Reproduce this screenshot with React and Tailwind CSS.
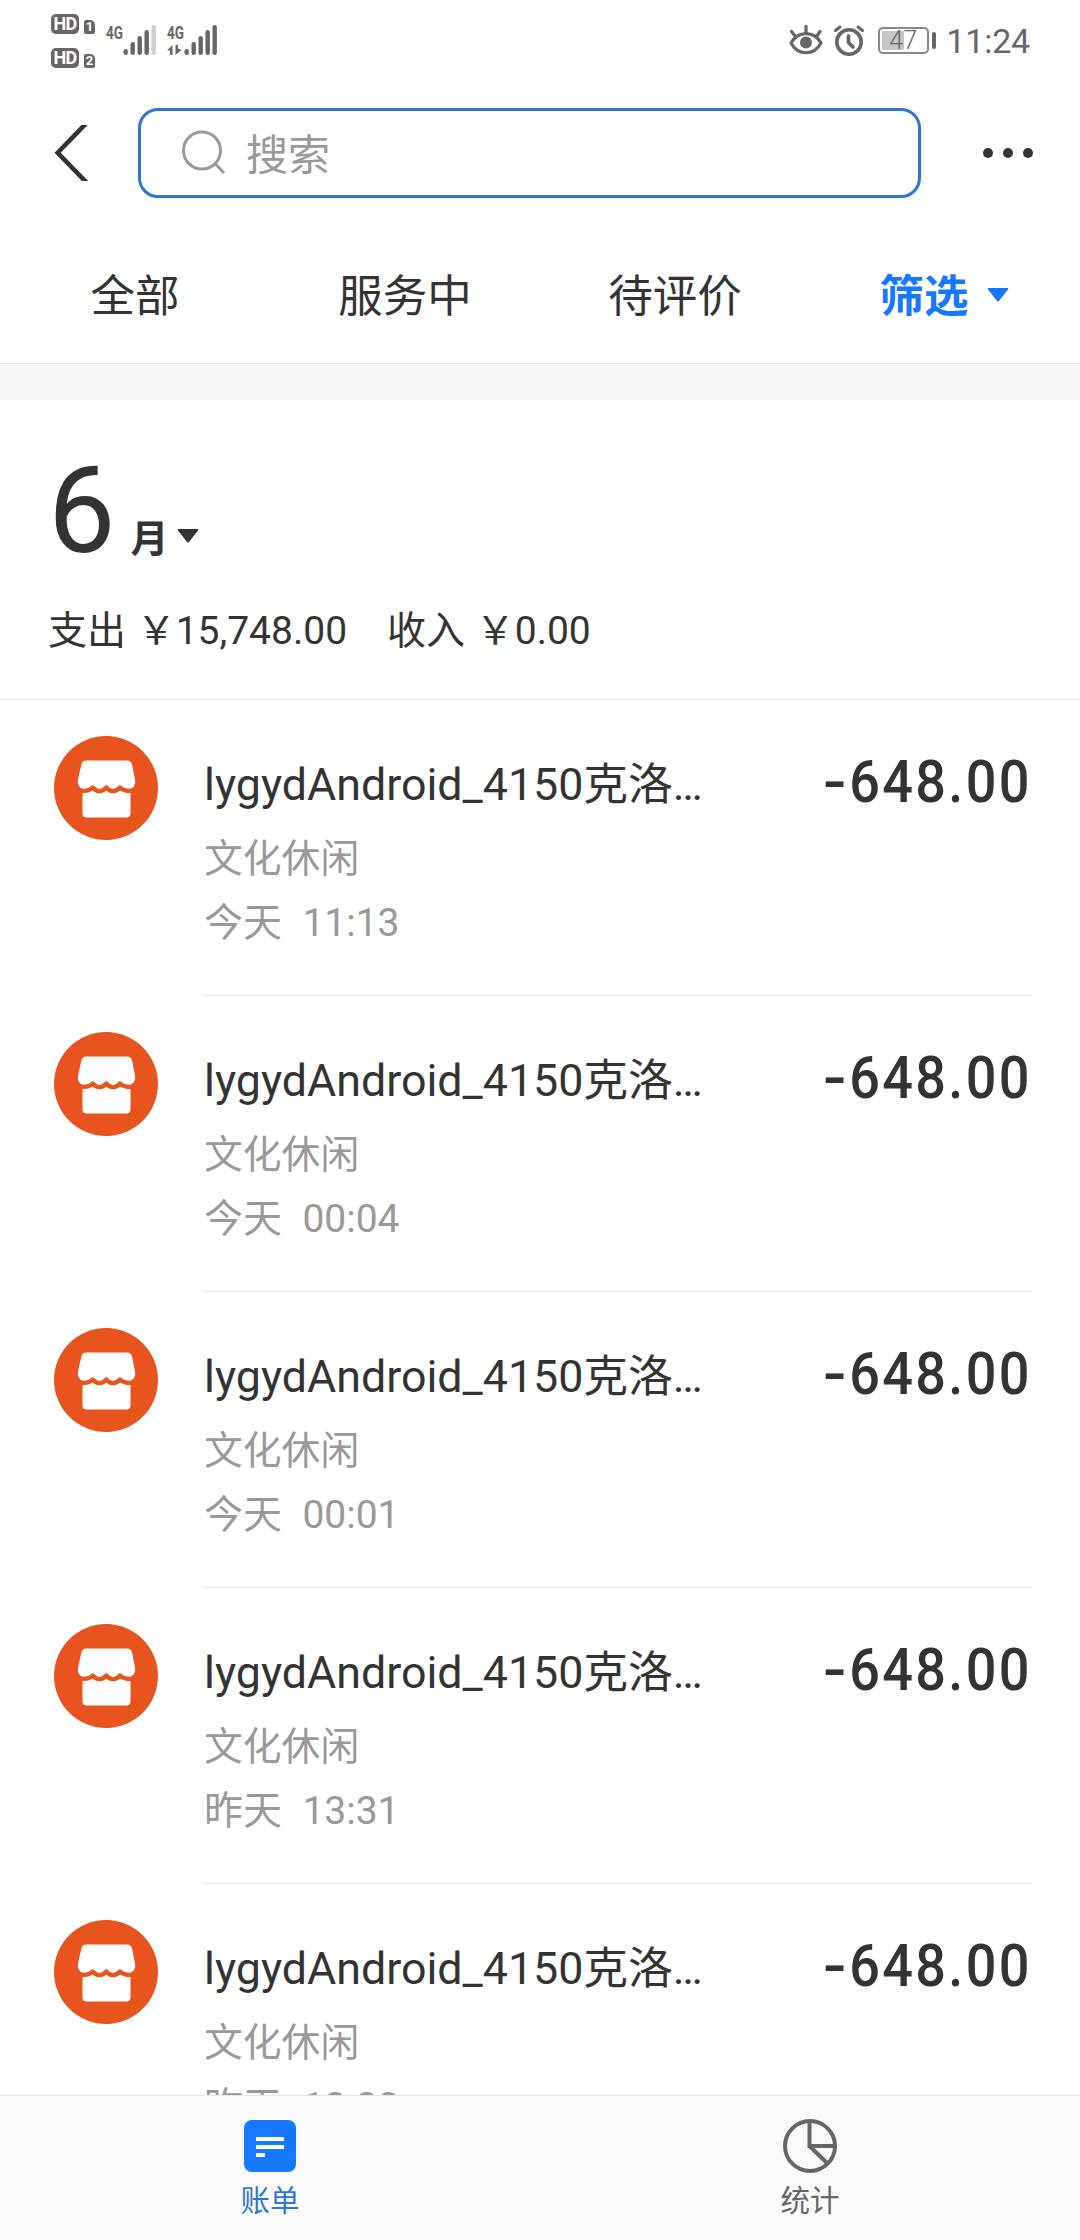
const transactions = [
  { day: '今天', time: '11:13' },
  { day: '今天', time: '00:04' },
  { day: '今天', time: '00:01' },
  { day: '昨天', time: '13:31' },
  { day: '昨天', time: '13:30' },
];

function HdBadge({ n }) {
  return (
    <div className="flex h-5 items-end">
      <span className="flex h-5 w-7 items-center justify-center rounded-[5px] bg-[#666] text-[18px] leading-5 font-bold tracking-[-0.8px] text-white">HD</span>
      <span className="ml-[5px] flex h-[14px] w-[11px] items-center justify-center rounded-tl-[2px] rounded-tr-[5px] rounded-b-[2px] bg-[#666] text-[13px] leading-[14px] font-bold text-white">{n}</span>
    </div>
  );
}

function Signal({ weak, data }) {
  return (
    <svg className="overflow-visible" width="50" height="34" viewBox="0 0 50 34" fill="#666">
      {[24, 17, 11, 5, 0].map((y, i) => (
        <rect key={y} x={17.5 + i * 7} y={y} width="4.4" height={30 - y} rx="2.2" fill={weak && i === 4 ? '#d0d0d0' : '#666'} />
      ))}
      <text x="0" y="13.5" fontSize="18.500" fontWeight="700" textLength="17" lengthAdjust="spacingAndGlyphs">4G</text>
      {data && <path d="M0 25.500 5.500 20v10H3v-4.500zM8.500 20H11v3.500l3.500 1.500-6 5z" />}
    </svg>
  );
}

function StatusBar() {
  return (
    <div className="flex h-20 shrink-0 items-start justify-between pr-[50px] pl-[51px] text-[#666]">
      <div className="flex">
        <div className="flex flex-col gap-[14px] pt-[14px]">
          <HdBadge n="1" />
          <HdBadge n="2" />
        </div>
        <div className="flex gap-[11px] pt-[25px] pl-[11px]">
          <Signal weak />
          <Signal data />
        </div>
      </div>
      <div className="flex h-20 items-center">
        <svg width="34" height="30" viewBox="0 0 34 30" fill="none" stroke="#666" strokeWidth="3.200" strokeLinecap="round">
          <path d="M2 18C9 5.500 25 5.500 32 18C25 31 9 31 2 18Z" strokeLinejoin="round" />
          <path d="M2.500 6.500 6 11M17 1.500v6M31 6.500 28 11" />
          <circle cx="17" cy="17.500" r="6" fill="#666" stroke="none" />
        </svg>
        <svg className="ml-[10px]" width="32" height="32" viewBox="0 0 32 32" fill="none" stroke="#666" strokeWidth="3.600" strokeLinecap="round">
          <circle cx="16" cy="18" r="12.200" />
          <path d="M15.500 12v6.500l4.500 4.500" />
          <path d="M2.500 6.500 7 3M25 3l4.500 3.500" strokeWidth="3" />
        </svg>
        <div className="ml-[13px] flex h-[27px] w-[51px] items-center rounded-[5px] border-2 border-[#888] p-[2px]">
          <div className="h-[19px] w-[22px] bg-[#c6c6c6]" />
          <span className="-ml-[15px] text-[25px] leading-[27px] font-light">47</span>
        </div>
        <div className="ml-[3px] h-[17px] w-1 rounded-[2px] bg-[#666]" />
        <span className="mt-[2px] ml-[10px] text-[34px] leading-10 tracking-[-0.2px]">11:24</span>
      </div>
    </div>
  );
}

function Triangle({ className }) {
  return (
    <svg className={className} width="22" height="14" viewBox="0 0 22 14" fill="currentColor">
      <path d="M1.500 0h19q1.500 0 .5 1.400L12 13q-1 1-2 0L1 1.400Q0 0 1.500 0z" />
    </svg>
  );
}

function Header() {
  return (
    <div className="flex h-[146px] shrink-0 items-start pt-7 pr-[46px] pl-[54px]">
      <svg className="mt-[17px]" width="34" height="56" viewBox="0 0 34 56" fill="none" stroke="#333" strokeWidth="4.600">
        <path d="M33.500 -3 3.700 27.750 33.500 58.500" />
      </svg>
      <div className="ml-[50px] flex h-[90px] w-[783px] items-center rounded-[20px] border-[3px] border-[#2f76d2] pl-10 text-[#999]">
        <svg width="46" height="46" viewBox="0 0 46 46" fill="none" stroke="#999" strokeWidth="3">
          <circle cx="21" cy="20.500" r="18.500" />
          <path d="m34 33.500 9 9.500" />
        </svg>
        <span className="mt-[5px] ml-[19px] text-[42px] leading-[60px]">搜索</span>
      </div>
      <div className="mt-10 ml-[62px] flex gap-[10px]">
        <i className="size-[10px] rounded-full bg-[#333]" />
        <i className="size-[10px] rounded-full bg-[#333]" />
        <i className="size-[10px] rounded-full bg-[#333]" />
      </div>
    </div>
  );
}

function StoreIcon() {
  return (
    <svg className="mt-9 shrink-0" width="104" height="104" viewBox="0 0 104 104">
      <circle cx="52" cy="52" r="52" fill="#e8541e" />
      <path fill="#fff" d="M32 24.500h41q4 0 5 3.500l3 15.500q1 7-4.500 9.500V77q0 4.500-4.500 4.500H33q-4.500 0-4.500-4.500V53q-5.500-2.500-4.500-9.500l3.500-15.500q1-3.500 4.500-3.500z" />
      <path fill="none" stroke="#e8541e" strokeWidth="4.200" strokeLinejoin="round" d="M24 53.500Q33 57 38.700 51.500Q45.500 59 52.300 51.500Q59 59 66 51.500Q72 57 81 53.500" />
    </svg>
  );
}

function Transaction({ day, time }) {
  return (
    <div className="flex h-[296px] shrink-0 pl-[54px]">
      <StoreIcon />
      <div className="mr-12 ml-[46px] flex flex-1 justify-between border-b border-[#e6e6e6]">
        <div className="pt-[55px]">
          <div className="text-[44.750px] leading-[60px] whitespace-nowrap text-[#333]">lygydAndroid_4150克洛…</div>
          <div className="mt-[11px] text-[38.800px] leading-[65px] text-[#999]">文化休闲</div>
          <div className="text-[39px] leading-[65px] [word-spacing:0.5px] whitespace-pre text-[#999]">{day}{'  '}{time}</div>
        </div>
        <div className="flex pt-[52px] text-[60px] leading-[60px] font-medium text-[#333]">
          <span className="origin-right translate-x-[2px] scale-x-[1.150]">-</span>
          <span className="-ml-[15px] origin-right scale-x-90 tracking-[2.600px]">648.00</span>
        </div>
      </div>
    </div>
  );
}

export default function App() {
  return (
    <div className="flex h-[2240px] w-[1080px] flex-col overflow-hidden bg-white font-[Roboto,'Noto_Sans_CJK_SC',sans-serif] text-[#333]">
      <StatusBar />
      <Header />
      <div className="grid h-[137px] shrink-0 grid-cols-4 pt-[37px] text-center text-[44.500px] leading-[68px]">
        <div>全部</div>
        <div>服务中</div>
        <div>待评价</div>
        <div className="flex items-start justify-center pr-[2px] font-bold text-[#1677ff]">
          筛选
          <Triangle className="mt-[25px] ml-[18px]" />
        </div>
      </div>
      <div className="h-[37px] shrink-0 border-t border-[#e6e6e6] bg-[#f7f7f7]" />
      <section className="flex h-[300px] shrink-0 flex-col border-b border-[#e6e6e6] pl-12">
        <div className="flex h-[191px] items-baseline pt-[41px]">
          <span className="text-[120px] leading-[140px]">6</span>
          <span className="ml-[15px] text-[38px] font-bold">月</span>
          <Triangle className="ml-[9px] -translate-y-[9px]" />
        </div>
        <div className="flex gap-[40px] text-[39px] leading-[80px] [word-spacing:1px]">
          <span>支出 ￥15,748.00</span>
          <span>收入 ￥0.00</span>
        </div>
      </section>
      <main className="flex min-h-0 flex-1 flex-col overflow-hidden">
        {transactions.map((t) => (
          <Transaction key={t.day + t.time} day={t.day} time={t.time} />
        ))}
      </main>
      <nav className="grid h-[145px] shrink-0 grid-cols-2 border-t border-[#e6e6e6] bg-[#fafafa] text-[29.500px] leading-10">
        <div className="flex flex-col items-center pt-6 text-[#2f76d2]">
          <svg width="52" height="52" viewBox="0 0 52 52">
            <rect width="52" height="52" rx="8" fill="#1677ff" />
            <path d="M12 17h28v4H12zM12 25h28v4H12zM12 33h9v4h-9z" fill="#fff" />
          </svg>
          <span className="mt-[9px]">账单</span>
        </div>
        <div className="flex flex-col items-center pt-[23px] text-[#666]">
          <svg width="54" height="54" viewBox="0 0 54 54" fill="none" stroke="#666" strokeWidth="4">
            <circle cx="27" cy="27" r="25" />
            <path d="M26.500 2v25H52M26.500 27 44 44" />
          </svg>
          <span className="mt-[8px]">统计</span>
        </div>
      </nav>
    </div>
  );
}
